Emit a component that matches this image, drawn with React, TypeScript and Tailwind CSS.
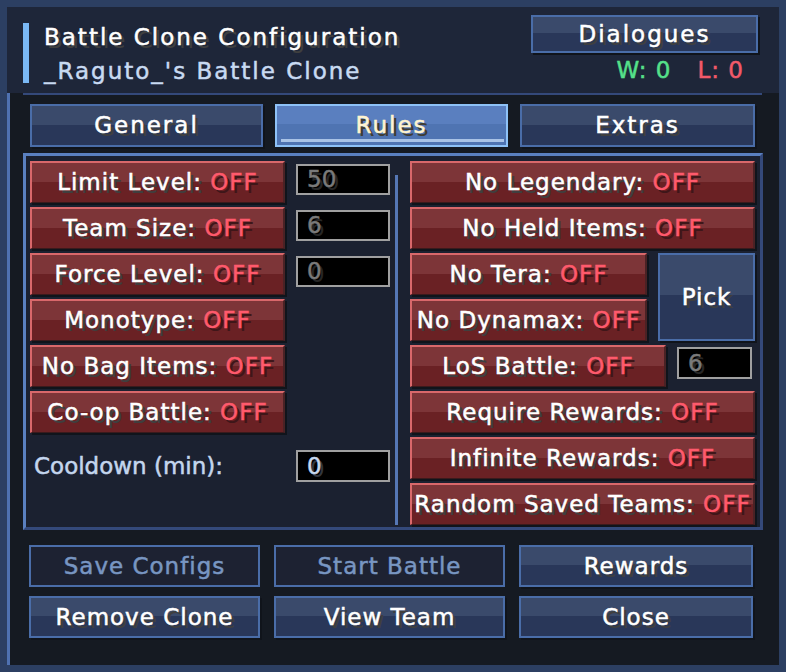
import React from 'react';

const shadowWhite = '[text-shadow:3px_3px_0_#3f3f3f]';

function RedToggle({ label, className = '' }: { label: string; className?: string }) {
  return (
    <div
      className={`flex h-[42px] shrink-0 items-center justify-center whitespace-nowrap border-l-2 border-t-2 border-r-2 border-b border-[#d9686b] border-r-[#4a2225] border-b-[#3a1a1c] bg-[linear-gradient(#7d3538_0%,#7d3538_48%,#6a2124_48%)] text-[23px] tracking-[1px] text-white shadow-[2px_2px_0_#10141b] ${shadowWhite} ${className}`}
    >
      <span>
        {label}: <span className="text-[#ff5a6c] [text-shadow:3px_3px_0_#3f1619]">OFF</span>
      </span>
    </div>
  );
}

function BlueButton({ children, className = '' }: { children: React.ReactNode; className?: string }) {
  return (
    <div
      className={`flex shrink-0 items-center justify-center whitespace-nowrap border-2 border-[#4a6da8] bg-[linear-gradient(#3a4a6b_0%,#3a4a6b_48%,#293759_48%)] text-[23px] tracking-[1px] text-white shadow-[2px_2px_0_#10141b] ${shadowWhite} ${className}`}
    >
      {children}
    </div>
  );
}

function DisabledButton({ children, className = '' }: { children: React.ReactNode; className?: string }) {
  return (
    <div
      className={`flex shrink-0 items-center justify-center whitespace-nowrap border-2 border-[#4a6da8] bg-[#1d2232] text-[23px] tracking-[1px] text-[#7896c2] ${className}`}
    >
      {children}
    </div>
  );
}

function NumBox({ value, light = false, className = '' }: { value: string; light?: boolean; className?: string }) {
  return (
    <div
      className={`flex shrink-0 items-center border-2 border-[#a0a0a0] bg-black pl-[9px] text-[23px] ${
        light ? 'text-[#c8d8ee] [text-shadow:3px_3px_0_#32363e]' : 'text-[#7a7a7a] [text-shadow:3px_3px_0_#262626]'
      } ${className}`}
    >
      {value}
    </div>
  );
}

export default function App() {
  return (
    <div className="h-[672px] w-[786px] bg-[#2c3f62] p-[7px] font-['DejaVu_Sans',sans-serif] leading-none [-webkit-text-stroke:0.5px]">
      <div className="flex h-full flex-col bg-[#151a22]">
        {/* Header */}
        <div className="flex h-[86px] shrink-0 justify-between bg-[#1e2639] pl-[16px] pr-[21px] pt-[8px]">
          <div className="mt-[8px] flex gap-[15px]">
            <div className="h-[60px] w-[6px] bg-[#7ab8f5]" />
            <div className="pt-[3px]">
              <div className={`whitespace-nowrap text-[23px] tracking-[2px] text-white ${shadowWhite}`}>
                Battle Clone Configuration
              </div>
              <div className="mt-[11px] whitespace-nowrap text-[23px] tracking-[2px] text-[#c8daf2]">
                _Raguto_'s Battle Clone
              </div>
            </div>
          </div>
          <div className="flex flex-col items-end">
            <BlueButton className="h-[38px] w-[227px] tracking-[2px]">Dialogues</BlueButton>
            <div className="mt-[6px] flex gap-[26px] pr-[14px] text-[23px] tracking-[1px]">
              <span className="text-[#55e08a]">W: 0</span>
              <span className="text-[#f25a6a]">L: 0</span>
            </div>
          </div>
        </div>

        {/* Body */}
        <div className="flex flex-1 flex-col border-l-[3px] border-[#4f71b0]">
          <div className="ml-[13px] mr-[17px] h-[2px] bg-[#34497a]" />

          {/* Tabs */}
          <div className="mt-[9px] flex gap-[12px] pl-[20px]">
            <BlueButton className="h-[43px] w-[233px] tracking-[2px]">General</BlueButton>
            <div className="relative flex h-[43px] w-[233px] items-center justify-center border-2 border-[#8ec2f7] bg-[linear-gradient(#5a7fbf_0%,#5a7fbf_45%,#4f74b2_45%)] text-[23px] tracking-[2px] text-[#fff4d0] [text-shadow:3px_3px_0_#3f3c33]">
              Rules
              <div className="absolute bottom-[3px] left-[4px] right-[2px] h-[3px] bg-[#a9c3e6]" />
            </div>
            <BlueButton className="h-[43px] w-[235px] tracking-[2px]">Extras</BlueButton>
          </div>

          {/* Rules panel */}
          <div className="ml-[13px] mt-[6px] flex h-[377px] w-[740px] border-[3px] border-[#34497a] border-l-[#5a80c0] border-t-[#5a80c0] bg-[#1b2130] pl-[4px] pt-[5px]">
            {/* Left column */}
            <div className="flex w-[360px] flex-col gap-[4px]">
              <div className="flex items-start gap-[11px]">
                <RedToggle label="Limit Level" className="w-[255px]" />
                <NumBox value="50" className="mt-[3px] h-[31px] w-[94px]" />
              </div>
              <div className="flex items-start gap-[11px]">
                <RedToggle label="Team Size" className="w-[255px]" />
                <NumBox value="6" className="mt-[3px] h-[31px] w-[94px]" />
              </div>
              <div className="flex items-start gap-[11px]">
                <RedToggle label="Force Level" className="w-[255px]" />
                <NumBox value="0" className="mt-[3px] h-[31px] w-[94px]" />
              </div>
              <RedToggle label="Monotype" className="w-[255px]" />
              <RedToggle label="No Bag Items" className="w-[255px]" />
              <RedToggle label="Co-op Battle" className="w-[255px]" />
              <div className="mt-[13px] flex items-center">
                <div className="w-[266px] whitespace-nowrap pl-[4px] text-[23px] text-[#c4d6ee]">Cooldown (min):</div>
                <NumBox value="0" light className="h-[32px] w-[94px]" />
              </div>
            </div>

            {/* Divider */}
            <div className="ml-[5px] mt-[14px] h-[350px] w-[3px] bg-[#5577b5]" />

            {/* Right column */}
            <div className="ml-[12px] flex w-[345px] flex-col gap-[4px]">
              <RedToggle label="No Legendary" />
              <RedToggle label="No Held Items" />
              <div className="flex gap-[11px]">
                <div className="flex w-[237px] flex-col gap-[4px]">
                  <RedToggle label="No Tera" />
                  <RedToggle label="No Dynamax" />
                </div>
                <BlueButton className="h-[88px] w-[97px] text-[#e8eef8]">Pick</BlueButton>
              </div>
              <div className="flex items-start gap-[11px]">
                <RedToggle label="LoS Battle" className="w-[256px]" />
                <NumBox value="6" className="mt-[2px] h-[32px] w-[75px]" />
              </div>
              <RedToggle label="Require Rewards" />
              <RedToggle label="Infinite Rewards" />
              <RedToggle label="Random Saved Teams" />
            </div>
          </div>

          {/* Bottom buttons */}
          <div className="mt-[15px] flex flex-col gap-[9px] pl-[19px]">
            <div className="flex gap-[14px]">
              <DisabledButton className="h-[42px] w-[231px]">Save Configs</DisabledButton>
              <DisabledButton className="h-[42px] w-[231px]">Start Battle</DisabledButton>
              <BlueButton className="h-[42px] w-[234px]">Rewards</BlueButton>
            </div>
            <div className="flex gap-[14px]">
              <BlueButton className="h-[42px] w-[231px]">Remove Clone</BlueButton>
              <BlueButton className="h-[42px] w-[231px]">View Team</BlueButton>
              <BlueButton className="h-[42px] w-[234px]">Close</BlueButton>
            </div>
          </div>
        </div>
      </div>
    </div>
  );
}
